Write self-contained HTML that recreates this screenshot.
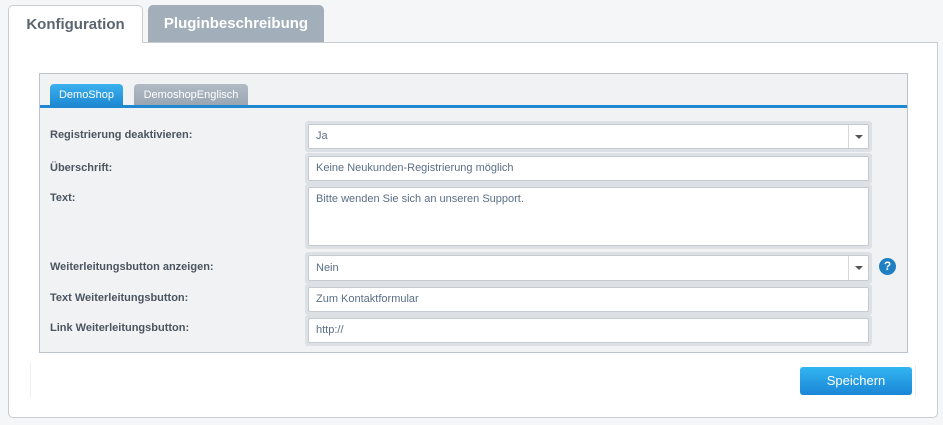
<!DOCTYPE html>
<html><head><meta charset="utf-8"><style>
*{box-sizing:border-box;margin:0;padding:0}
body{width:943px;height:425px;background:#f5f6f7;font-family:"Liberation Sans",Arial,sans-serif;position:relative;overflow:hidden}
.abs{position:absolute}
.panel{left:8px;top:42px;width:930px;height:376px;background:#fff;border:1px solid #c8cdd2;border-radius:0 0 5px 5px}
.tab1{left:8px;top:5px;width:135px;height:38px;background:#fff;border:1px solid #c8cdd2;border-bottom:none;border-radius:5px 5px 0 0;font-size:15px;color:#5a6570;font-weight:bold;text-align:center;line-height:38px;z-index:2}
.tab2{left:148px;top:5px;width:176px;height:37px;background:#a2afba;border-radius:5px 5px 0 0;font-size:15px;color:#fff;font-weight:bold;text-align:center;line-height:38px}
.box{left:39px;top:73px;width:869px;height:280px;background:#f1f2f4;border:1px solid #bcc3ca}
.st{top:84px;height:22px;border-radius:4px 4px 0 0;font-size:11px;color:#fff;text-align:center;line-height:22px}
.bl{left:40px;top:105px;width:867px;height:3px;background:#1f88d0}
.lbl{left:50px;font-size:11px;font-weight:bold;color:#4a5560}
.f{left:305px;width:567px;background:#dde1e5;border-radius:3px;padding:3px}
.f div{background:#fff;border:1px solid #c5cbd1;border-radius:2px;height:100%;font-size:11px;color:#5a6f85;padding:0 7px;position:relative}
.dd{position:absolute;right:0;top:0;width:20px;height:100%;border-left:1px solid #d5d9dd}
.dd:after{content:"";position:absolute;left:6px;top:10px;border:4px solid transparent;border-top:4px solid #555;border-bottom:0}
.help{left:879px;top:258px;width:17px;height:17px;border-radius:50%;background:#1f7fc4;color:#fff;font-size:12px;font-weight:bold;text-align:center;line-height:17px}
.btn{left:800px;top:367px;width:112px;height:28px;border-radius:3px;background:linear-gradient(#33b5f2,#1a86d6);color:#fff;font-size:13px;text-align:center;line-height:28px}
</style></head><body>
<div class="abs panel"></div>
<div class="abs tab1">Konfiguration</div>
<div class="abs tab2">Pluginbeschreibung</div>
<div class="abs" style="left:30px;top:362px;width:1px;height:36px;background:#eee"></div>
<div class="abs box"></div>
<div class="abs st" style="left:50px;width:73px;background:linear-gradient(#3cb1ee,#1d88d2)">DemoShop</div>
<div class="abs st" style="left:134px;width:114px;background:linear-gradient(#b0bbc5,#98a5b1)">DemoshopEnglisch</div>
<div class="abs bl"></div>
<div class="abs lbl" style="top:129px">Registrierung deaktivieren:</div>
<div class="abs lbl" style="top:162px">Überschrift:</div>
<div class="abs lbl" style="top:192px">Text:</div>
<div class="abs lbl" style="top:261px">Weiterleitungsbutton anzeigen:</div>
<div class="abs lbl" style="top:292px">Text Weiterleitungsbutton:</div>
<div class="abs lbl" style="top:322px">Link Weiterleitungsbutton:</div>
<div class="abs f" style="top:121px;height:31px"><div style="line-height:23px">Ja<span class="dd"></span></div></div>
<div class="abs f" style="top:153px;height:31px"><div style="line-height:23px">Keine Neukunden-Registrierung möglich</div></div>
<div class="abs f" style="top:184px;height:65px"><div style="line-height:22px;padding-top:0">Bitte wenden Sie sich an unseren Support.</div></div>
<div class="abs f" style="top:252px;height:32px"><div style="line-height:24px">Nein<span class="dd"></span></div></div>
<div class="abs f" style="top:284px;height:31px"><div style="line-height:23px">Zum Kontaktformular</div></div>
<div class="abs f" style="top:315px;height:31px"><div style="line-height:23px">http://</div></div>
<div class="abs help">?</div>
<div class="abs" style="left:915px;top:365px;width:1px;height:32px;background:#eee"></div>
<div class="abs btn">Speichern</div>
</body></html>
